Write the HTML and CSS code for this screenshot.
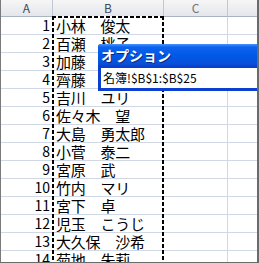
FILE: index.html
```html
<!DOCTYPE html>
<html lang="ja">
<head>
    <meta charset="UTF-8">
    <title>名簿</title>
    <link rel="stylesheet" href="styles.css">
</head>
<body>
    <div class="sheet">
        <div class="grid">
            <div class="hd">A</div><div class="hd">B</div><div class="hd hd-dim">C</div><div class="hd"></div>

            <div class="num">1</div><div class="name">小林　俊太</div><div></div><div></div>
            <div class="num">2</div><div class="name">百瀬　桃子</div><div></div><div></div>
            <div class="num">3</div><div class="name">加藤　あゆみ</div><div></div><div></div>
            <div class="num">4</div><div class="name">齊藤　ゆうこ</div><div></div><div></div>
            <div class="num">5</div><div class="name">吉川　ユリ</div><div></div><div></div>
            <div class="num">6</div><div class="name">佐々木　望</div><div></div><div></div>
            <div class="num">7</div><div class="name">大島　勇太郎</div><div></div><div></div>
            <div class="num">8</div><div class="name">小菅　泰二</div><div></div><div></div>
            <div class="num">9</div><div class="name">宮原　武</div><div></div><div></div>
            <div class="num">10</div><div class="name">竹内　マリ</div><div></div><div></div>
            <div class="num">11</div><div class="name">宮下　卓</div><div></div><div></div>
            <div class="num">12</div><div class="name">児玉　こうじ</div><div></div><div></div>
            <div class="num">13</div><div class="name">大久保　沙希</div><div></div><div></div>
            <div class="num">14</div><div class="name">菊地　朱莉</div><div></div><div></div>
        </div>

        <!-- copy marquee around B1:B25 -->
        <div class="ants"></div>

        <div class="dialog">
            <div class="dlg-title">オプション</div>
            <div class="dlg-field">名簿!$B$1:$B$25</div>
        </div>
    </div>
</body>
</html>
```

FILE: styles.css
```css
* { margin: 0; padding: 0; box-sizing: border-box; }
body { background: #fff; font-family: "Noto Sans CJK JP", "Noto Sans", sans-serif; }

.sheet {
    position: relative; width: 259px; height: 263px; overflow: hidden;
    border-left: 1px solid #7a7a7a; border-right: 2px solid #6a6a6a; border-bottom: 1px solid #6a6a6a;
    background: #fff;
}

.grid {
    display: grid; grid-template-columns: 52px 111px 64px 29px;
    grid-template-rows: 17px; grid-auto-rows: 18px;
}
.grid > div { border-right: 1px solid #d0d7e5; border-bottom: 1px solid #d0d7e5; }
.grid > div:nth-child(4n) { border-right: none; }

.hd {
    background: linear-gradient(#f6f6f6, #e4e6eb);
    border-right-color: #c0c8d4 !important; border-bottom-color: #a9b4c2 !important;
    text-align: center; font-size: 12px; line-height: 16px; color: #3c4a5c;
}
.grid > .hd:nth-child(4) { border-right: none; }
.hd-dim { color: #6a7482; }

.num { text-align: right; padding-right: 2px; font-size: 14px; line-height: 17px; color: #000; }
.name { padding-left: 3px; font-size: 15px; line-height: 17px; color: #000; white-space: nowrap; letter-spacing: -0.2px; }

.ants {
    position: absolute; left: 51px; top: 16px; width: 112px; height: 260px;
    background:
        repeating-linear-gradient(to bottom, #000 0 4px, #fff 4px 6px) left top / 2px 100% no-repeat,
        repeating-linear-gradient(to bottom, #000 0 4px, #fff 4px 6px) right top / 2px 100% no-repeat,
        repeating-linear-gradient(to right, #000 0 4px, #fff 4px 6px) left top / 100% 2px no-repeat;
}

.dialog {
    position: absolute; left: 97px; top: 44px; width: 200px;
    background: #0a3fd0; padding: 0 0 3px 3px; border-top-left-radius: 3px;
}
.dlg-title {
    height: 22px; padding-left: 3px; margin-left: -3px; border-top-left-radius: 3px;
    background: linear-gradient(#4a94ff 0, #0d63ee 3px, #0058e6 12px, #0a50d8 20px, #0840c8);
    color: #fff; font-size: 14px; font-weight: bold; line-height: 22px;
    text-shadow: 1px 1px 0 #0a2a8a;
}
.dlg-field {
    height: 22px; background: #fff; border-top: 2px solid #0a3fd0;
    padding-left: 2px; font-size: 12px; line-height: 19px; color: #000;
}
```
